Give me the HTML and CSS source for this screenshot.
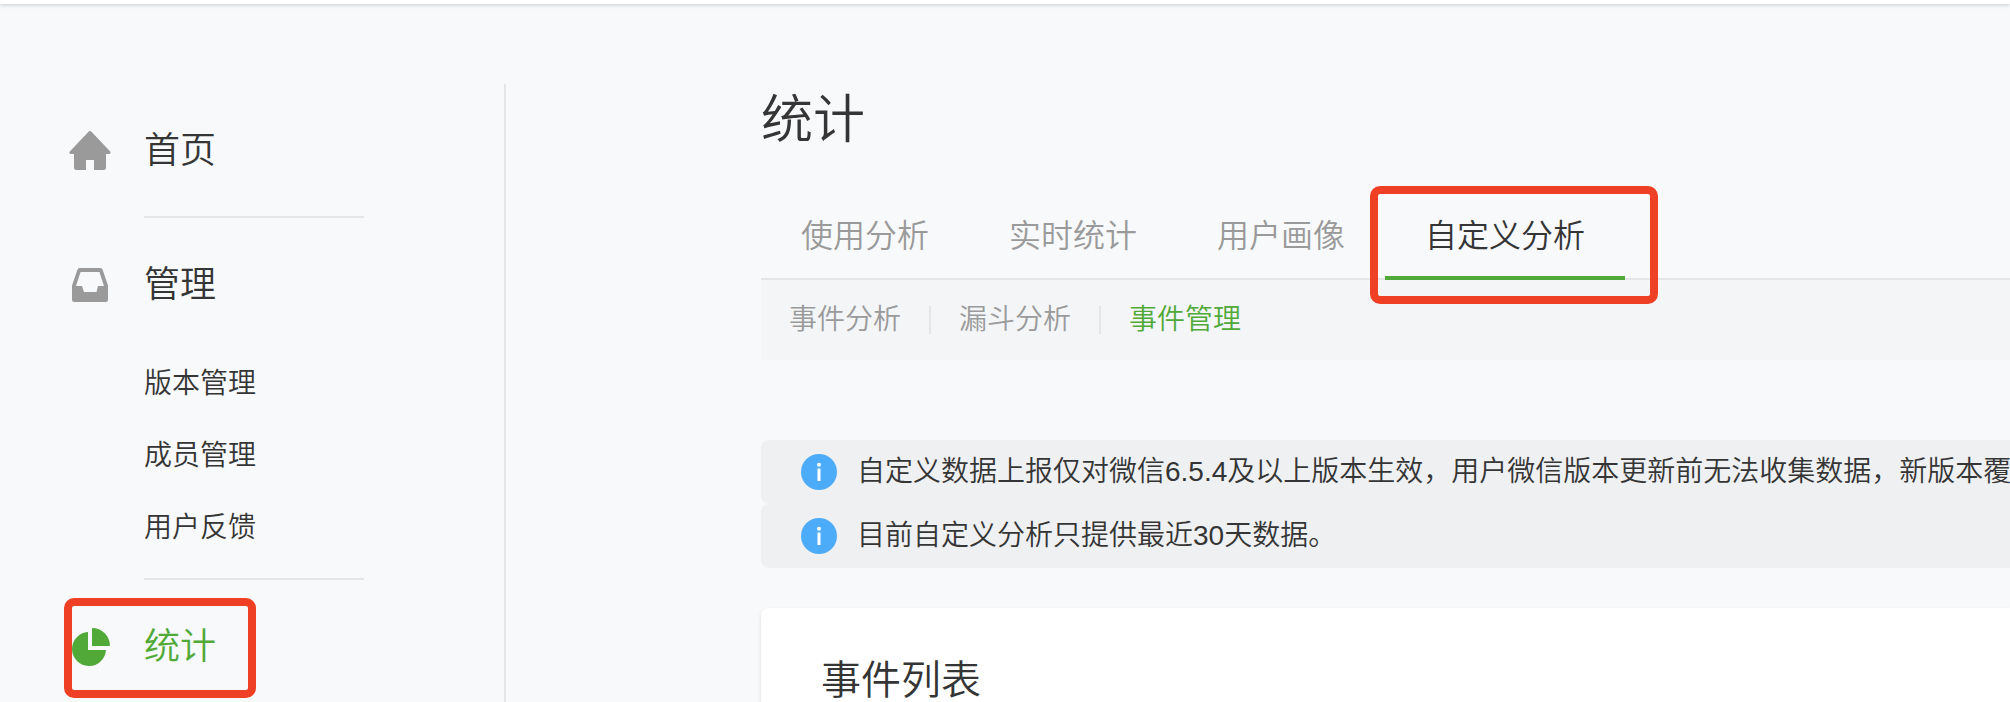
FILE: index.html
```html
<!DOCTYPE html>
<html lang="zh-CN">
<head>
    <meta charset="UTF-8">
    <meta name="viewport" content="width=device-width, initial-scale=1.0">
    <title>统计</title>
    <link rel="stylesheet" href="styles.css">
</head>
<body>

<header class="top-bar"></header>

<div class="page">
    <nav class="sidebar">
        <div class="nav-section">
            <a href="#" class="nav-item">
                <svg class="nav-icon" viewBox="0 0 44 44" aria-hidden="true">
                    <path d="M20.5 2.7Q22 1.3 23.5 2.7L42.2 22.6Q43.4 24.6 41.4 25H38V38.5Q38 41 35.5 41H26V31H18V41H8.5Q6 41 6 38.5V25H2.6Q0.6 24.6 1.8 22.6Z"/>
                </svg>
                <span>首页</span>
            </a>
        </div>

        <div class="nav-section">
            <a href="#" class="nav-item">
                <svg class="nav-icon" viewBox="0 0 44 44" aria-hidden="true">
                    <path fill-rule="evenodd" d="M11.5 5H32.5Q34 5 34.5 6.5L40 22.500V36.5Q40 39 37.5 39H6.5Q4 39 4 36.5V22.5L9.500 6.5Q10 5 11.5 5ZM12.6 9L8 23H14L16 29H28.5L30 23H36L31.4 9Z"/>
                </svg>
                <span>管理</span>
            </a>
            <ul class="sub-nav">
                <li><a href="#">版本管理</a></li>
                <li><a href="#">成员管理</a></li>
                <li><a href="#">用户反馈</a></li>
            </ul>
        </div>

        <div class="nav-section">
            <a href="#" class="nav-item active">
                <svg class="nav-icon" viewBox="0 0 44 44" aria-hidden="true">
                    <path d="M20 7V25H38A17 17 0 1 1 20 7Z"/>
                    <path d="M24 3A18 18 0 0 1 42 21H24Z"/>
                </svg>
                <span>统计</span>
            </a>
        </div>
    </nav>

    <main class="main">
        <h1 class="page-title">统计</h1>

        <div class="tabs">
            <a href="#" class="tab">使用分析</a>
            <a href="#" class="tab">实时统计</a>
            <a href="#" class="tab">用户画像</a>
            <a href="#" class="tab active">自定义分析</a>
        </div>

        <div class="sub-tabs">
            <a href="#" class="sub-tab">事件分析</a>
            <a href="#" class="sub-tab">漏斗分析</a>
            <a href="#" class="sub-tab active">事件管理</a>
        </div>

        <div class="notices">
            <div class="notice">
                <svg class="notice-icon" viewBox="0 0 36 36" aria-hidden="true">
                    <circle cx="18" cy="18" r="18" fill="#4dacfa"/>
                    <circle cx="18" cy="10.7" r="2" fill="#fff"/>
                    <path d="M16.5 14.5h3V27h-3z" fill="#fff"/>
                </svg>
                <p>自定义数据上报仅对微信6.5.4及以上版本生效，用户微信版本更新前无法收集数据，新版本覆</p>
            </div>
            <div class="notice">
                <svg class="notice-icon" viewBox="0 0 36 36" aria-hidden="true">
                    <circle cx="18" cy="18" r="18" fill="#4dacfa"/>
                    <circle cx="18" cy="10.7" r="2" fill="#fff"/>
                    <path d="M16.5 14.5h3V27h-3z" fill="#fff"/>
                </svg>
                <p>目前自定义分析只提供最近30天数据。</p>
            </div>
        </div>

        <section class="card">
            <h2>事件列表</h2>
        </section>
    </main>
</div>

</body>
</html>
```
FILE: styles.css
```css
*,
*::before,
*::after {
    margin: 0;
    padding: 0;
    box-sizing: border-box;
}
body {
    display: flex;
    flex-direction: column;
    height: 100vh;
    background: #f8f9fb;
    color: #353535;
    font-family: "Liberation Sans", "Noto Sans CJK SC", sans-serif;
    font-size: 28px;
    font-weight: 350;
    overflow: hidden;
}
a {
    color: inherit;
    text-decoration: none;
}
ul {
    list-style: none;
}
.top-bar {
    flex: none;
    height: 4px;
    background: #fff;
    box-shadow: 0 1px 4px rgba(0, 0, 0, 0.2);
}
.page {
    flex: 1;
    display: flex;
    padding-top: 80px;
}

/* Sidebar */
.sidebar {
    flex: none;
    width: 506px;
    padding-left: 68px;
    border-right: 2px solid #e4e5e7;
}
.nav-section::after {
    content: "";
    display: block;
    width: 220px;
    height: 2px;
    margin: 14px 0 0 76px;
    background: #e4e5e7;
}
.nav-section:last-child::after {
    display: none;
}
.nav-item {
    position: relative;
    display: flex;
    align-items: center;
    gap: 32px;
    padding: 40px 0 24px;
    font-size: 36px;
    line-height: 54px;
}
.nav-icon {
    width: 44px;
    height: 44px;
    fill: #9a9a9a;
}
.nav-item.active {
    color: #51a938;
}
.nav-item.active .nav-icon {
    fill: #51a938;
}
.sub-nav {
    padding: 12px 0 0 76px;
}
.sub-nav a {
    display: block;
    line-height: 72px;
}

/* Red highlight frames */
.nav-item.active::after,
.tab.active::after {
    content: "";
    position: absolute;
    border: 8px solid #ef4026;
    border-radius: 10px;
}
.nav-item.active::after {
    top: 18px;
    bottom: 0;
    left: -4px;
    width: 192px;
}
.tab.active::after {
    top: 0;
    right: -33px;
    bottom: -28px;
    left: -15px;
}

/* Main */
.main {
    flex: 1;
    min-width: 0;
    padding-left: 255px;
}
.page-title {
    font-size: 52px;
    font-weight: 350;
    line-height: 72px;
}
.tabs {
    display: flex;
    margin-top: 30px;
    color: #9a9a9a;
    font-size: 32px;
    line-height: 48px;
    box-shadow: inset 0 -2px #e4e5e7;
}
.tab {
    position: relative;
    padding: 26px 40px 16px;
    border-bottom: 4px solid transparent;
}
.tab.active {
    color: #353535;
    border-bottom-color: #51a938;
}
.sub-tabs {
    display: flex;
    align-items: center;
    height: 80px;
    background: #f3f5f7;
    color: #9a9a9a;
}
.sub-tab {
    padding: 0 28px;
    line-height: 28px;
}
.sub-tab + .sub-tab {
    border-left: 2px solid #e4e5e7;
}
.sub-tab.active {
    color: #51a938;
}
.notices {
    margin-top: 80px;
}
.notice {
    display: flex;
    align-items: center;
    gap: 20px;
    padding-left: 40px;
    background: #eff0f2;
    border-radius: 8px 0 0 8px;
    line-height: 64px;
    white-space: nowrap;
    overflow: hidden;
}
.notice-icon {
    flex: none;
    width: 36px;
    height: 36px;
}
.card {
    margin-top: 40px;
    padding: 40px 60px 0;
    background: #fff;
    border-radius: 8px 0 0 0;
    box-shadow: 0 2px 4px rgba(0, 0, 0, 0.12);
}
.card h2 {
    font-size: 40px;
    font-weight: 350;
    line-height: 64px;
}
```
